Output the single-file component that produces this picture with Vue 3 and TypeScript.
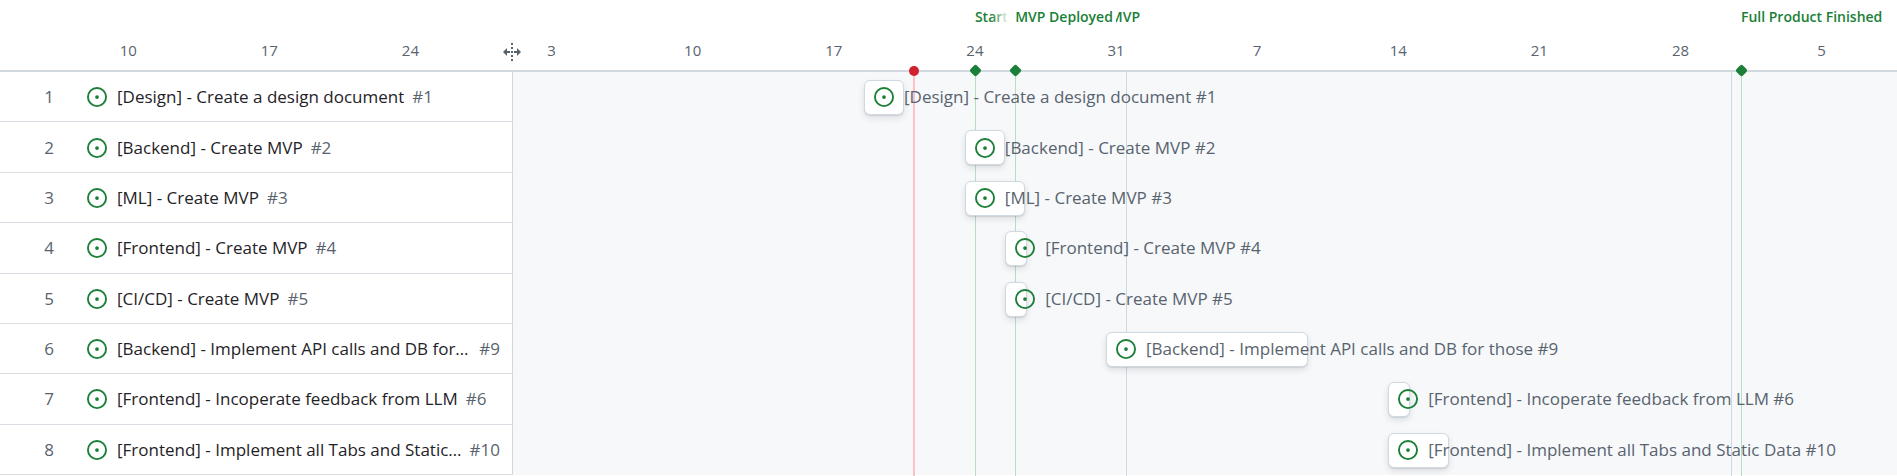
<script setup lang="ts">
import { computed } from 'vue'

interface Issue {
  title: string
  number: number
  start: number
  days: number
}

interface Milestone {
  day: number
  label: string
  behind?: string
}

// Days are counted from March 24; the window shows a fractional span around it.
const FIRST_DAY = -47.86
const VISIBLE_DAYS = 94.1

const issues: Issue[] = [
  { title: '[Design] - Create a design document', number: 1, start: -5, days: 2 },
  { title: '[Backend] - Create MVP', number: 2, start: 0, days: 2 },
  { title: '[ML] - Create MVP', number: 3, start: 0, days: 3 },
  { title: '[Frontend] - Create MVP', number: 4, start: 2, days: 1 },
  { title: '[CI/CD] - Create MVP', number: 5, start: 2, days: 1 },
  { title: '[Backend] - Implement API calls and DB for those', number: 9, start: 7, days: 10 },
  { title: '[Frontend] - Incoperate feedback from LLM', number: 6, start: 21, days: 1 },
  { title: '[Frontend] - Implement all Tabs and Static Data', number: 10, start: 21, days: 3 },
]

const weekLabels = ['10', '17', '24', '3', '10', '17', '24', '31', '7', '14', '21', '28', '5']
const weeks = computed(() => weekLabels.map((label, i) => ({ label, day: (i - 6) * 7 })))

const milestones: Milestone[] = [
  { day: 0, label: 'Start' },
  { day: 2, label: 'MVP Deployed', behind: 'MVP' },
  { day: 38, label: 'Full Product Finished' },
]
const monthStarts = [8, 38]
const today = -3

const share = (days: number): string => `${(days / VISIBLE_DAYS) * 100}%`
const edge = (day: number) => ({ left: share(day - FIRST_DAY) })
const middle = (day: number) => ({ left: share(day + 0.5 - FIRST_DAY) })
const span = (issue: Issue) => ({ ...edge(issue.start), width: share(issue.days) })
</script>

<template>
  <main class="roadmap">
    <header class="timeline-head">
      <div v-for="m in milestones" :key="m.label" class="milestone-label" :style="middle(m.day)">
        <span class="front">{{ m.label }}</span>
        <span v-if="m.behind" class="behind">{{ m.behind }}</span>
      </div>
      <span v-for="w in weeks" :key="w.day" class="week" :style="middle(w.day)">{{ w.label }}</span>
      <button class="resizer" type="button" aria-label="Resize title column">
        <svg viewBox="0 0 18 18" width="18" height="18" aria-hidden="true">
          <path d="M0 9l4-4v3h3v2H4v3zM18 9l-4-4v3h-3v2h3v3z" />
          <path d="M8 0h2v2H8zM8 4h2v2H8zM8 8h2v2H8zM8 12h2v2H8zM8 16h2v2H8z" />
        </svg>
      </button>
    </header>

    <div class="body">
      <div class="lines" aria-hidden="true">
        <i v-for="d in monthStarts" :key="d" class="line month" :style="edge(d)"></i>
        <i class="line today" :style="middle(today)"></i>
        <i v-for="m in milestones" :key="m.day" class="line milestone" :style="middle(m.day)"></i>
      </div>

      <ol class="rows">
        <li v-for="(issue, i) in issues" :key="issue.number" class="row">
          <div class="bar" :style="span(issue)"></div>
          <div class="bar-content" :style="edge(issue.start)">
            <svg class="open-icon" viewBox="0 0 16 16" aria-hidden="true">
              <path d="M8 9.5a1.5 1.5 0 1 0 0-3 1.5 1.5 0 0 0 0 3Z" />
              <path d="M8 0a8 8 0 1 1 0 16A8 8 0 0 1 8 0ZM1.5 8a6.5 6.5 0 1 0 13 0 6.5 6.5 0 0 0-13 0Z" />
            </svg>
            <span>{{ issue.title }} #{{ issue.number }}</span>
          </div>
          <div class="cell">
            <span class="index">{{ i + 1 }}</span>
            <svg class="open-icon" viewBox="0 0 16 16" aria-hidden="true">
              <path d="M8 9.5a1.5 1.5 0 1 0 0-3 1.5 1.5 0 0 0 0 3Z" />
              <path d="M8 0a8 8 0 1 1 0 16A8 8 0 0 1 8 0ZM1.5 8a6.5 6.5 0 1 0 13 0 6.5 6.5 0 0 0-13 0Z" />
            </svg>
            <a class="title" href="#">{{ issue.title }}</a>
            <span class="number">#{{ issue.number }}</span>
          </div>
        </li>
      </ol>

      <div class="markers" aria-hidden="true">
        <i class="dot" :style="middle(today)"></i>
        <i v-for="m in milestones" :key="m.day" class="diamond" :style="middle(m.day)"></i>
      </div>
    </div>
  </main>
</template>

<style>
body {
  margin: 0;
  background: #fff;
}
</style>

<style scoped>
.roadmap {
  display: flex;
  flex-direction: column;
  box-sizing: border-box;
  min-height: 100vh;
  padding-bottom: 1px;
  overflow: hidden;
  font-family: "Segoe UI", "Open Sans", "Noto Sans", sans-serif;
  font-size: 17px;
  line-height: 24px;
  color: #1f2328;
}

.timeline-head {
  position: relative;
  height: 70px;
  border-bottom: 2px solid #d1d9e0;
}

.week {
  position: absolute;
  top: 38px;
  transform: translateX(-50%);
  font-size: 15px;
  color: #59636e;
}

.milestone-label {
  position: absolute;
  top: 5px;
  display: flex;
  isolation: isolate;
  font-size: 14px;
  font-weight: 600;
  white-space: nowrap;
  color: #1a7f37;
}

.milestone-label::before {
  content: "";
  position: absolute;
  top: 0;
  right: 100%;
  width: 24px;
  height: 24px;
  background: linear-gradient(to right, rgba(255, 255, 255, 0), #fff 75%);
}

.front {
  position: relative;
  z-index: 1;
  padding-right: 3px;
  background: #fff;
}

.behind {
  margin-left: -6px;
}

.resizer {
  position: absolute;
  top: 43px;
  left: 503px;
  width: 18px;
  height: 18px;
  padding: 0;
  border: 0;
  background: none;
  cursor: col-resize;
}

.resizer svg {
  display: block;
  fill: #59636e;
}

.body {
  position: relative;
  display: flex;
  flex: 1;
  background: #f6f8fa;
}

.rows {
  display: grid;
  flex: 1;
  grid-auto-rows: 1fr;
  margin: 0;
  padding: 0;
  list-style: none;
}

.row {
  position: relative;
  display: flex;
  min-height: 50px;
}

.cell {
  position: relative;
  display: flex;
  align-items: center;
  box-sizing: border-box;
  width: 513px;
  padding: 1px 12px 0 32px;
  border-right: 1px solid #d1d9e0;
  border-bottom: 1px solid #d8dee4;
  background: #fff;
}

.index {
  flex: none;
  width: 34px;
  margin-right: 21px;
  text-align: center;
  color: #59636e;
}

.open-icon {
  flex: none;
  width: 20px;
  height: 20px;
  fill: #1a7f37;
}

.title {
  overflow: hidden;
  margin-left: 10px;
  text-overflow: ellipsis;
  white-space: nowrap;
  text-decoration: none;
  color: inherit;
}

.number {
  flex: none;
  margin-left: 8px;
  color: #59636e;
}

.bar {
  position: absolute;
  top: 8px;
  box-sizing: border-box;
  min-width: 22px;
  height: 35px;
  border: 1px solid #d1d9e0;
  border-radius: 6px;
  background: #fff;
  box-shadow: 0 1px 1px rgba(37, 41, 46, 0.1), 0 3px 6px rgba(37, 41, 46, 0.12);
}

.bar-content {
  position: absolute;
  top: 0;
  bottom: 0;
  display: flex;
  align-items: center;
  gap: 10px;
  padding-left: 10px;
  white-space: nowrap;
  color: #59636e;
}

.line {
  position: absolute;
  top: 0;
  bottom: -1px;
  width: 1px;
}

.month {
  background: #d1d9e0;
}

.milestone {
  background: #b4dfc2;
}

.today {
  width: 2px;
  margin-left: -1px;
  background: #ffc1c4;
}

.dot,
.diamond {
  position: absolute;
  top: -6px;
  width: 10px;
  height: 10px;
  margin-left: -5px;
  border-radius: 50%;
  background: #cf222e;
}

.diamond {
  width: 9px;
  height: 9px;
  margin-left: -4px;
  border-radius: 2px;
  background: #1a7f37;
  transform: rotate(45deg);
}
</style>
